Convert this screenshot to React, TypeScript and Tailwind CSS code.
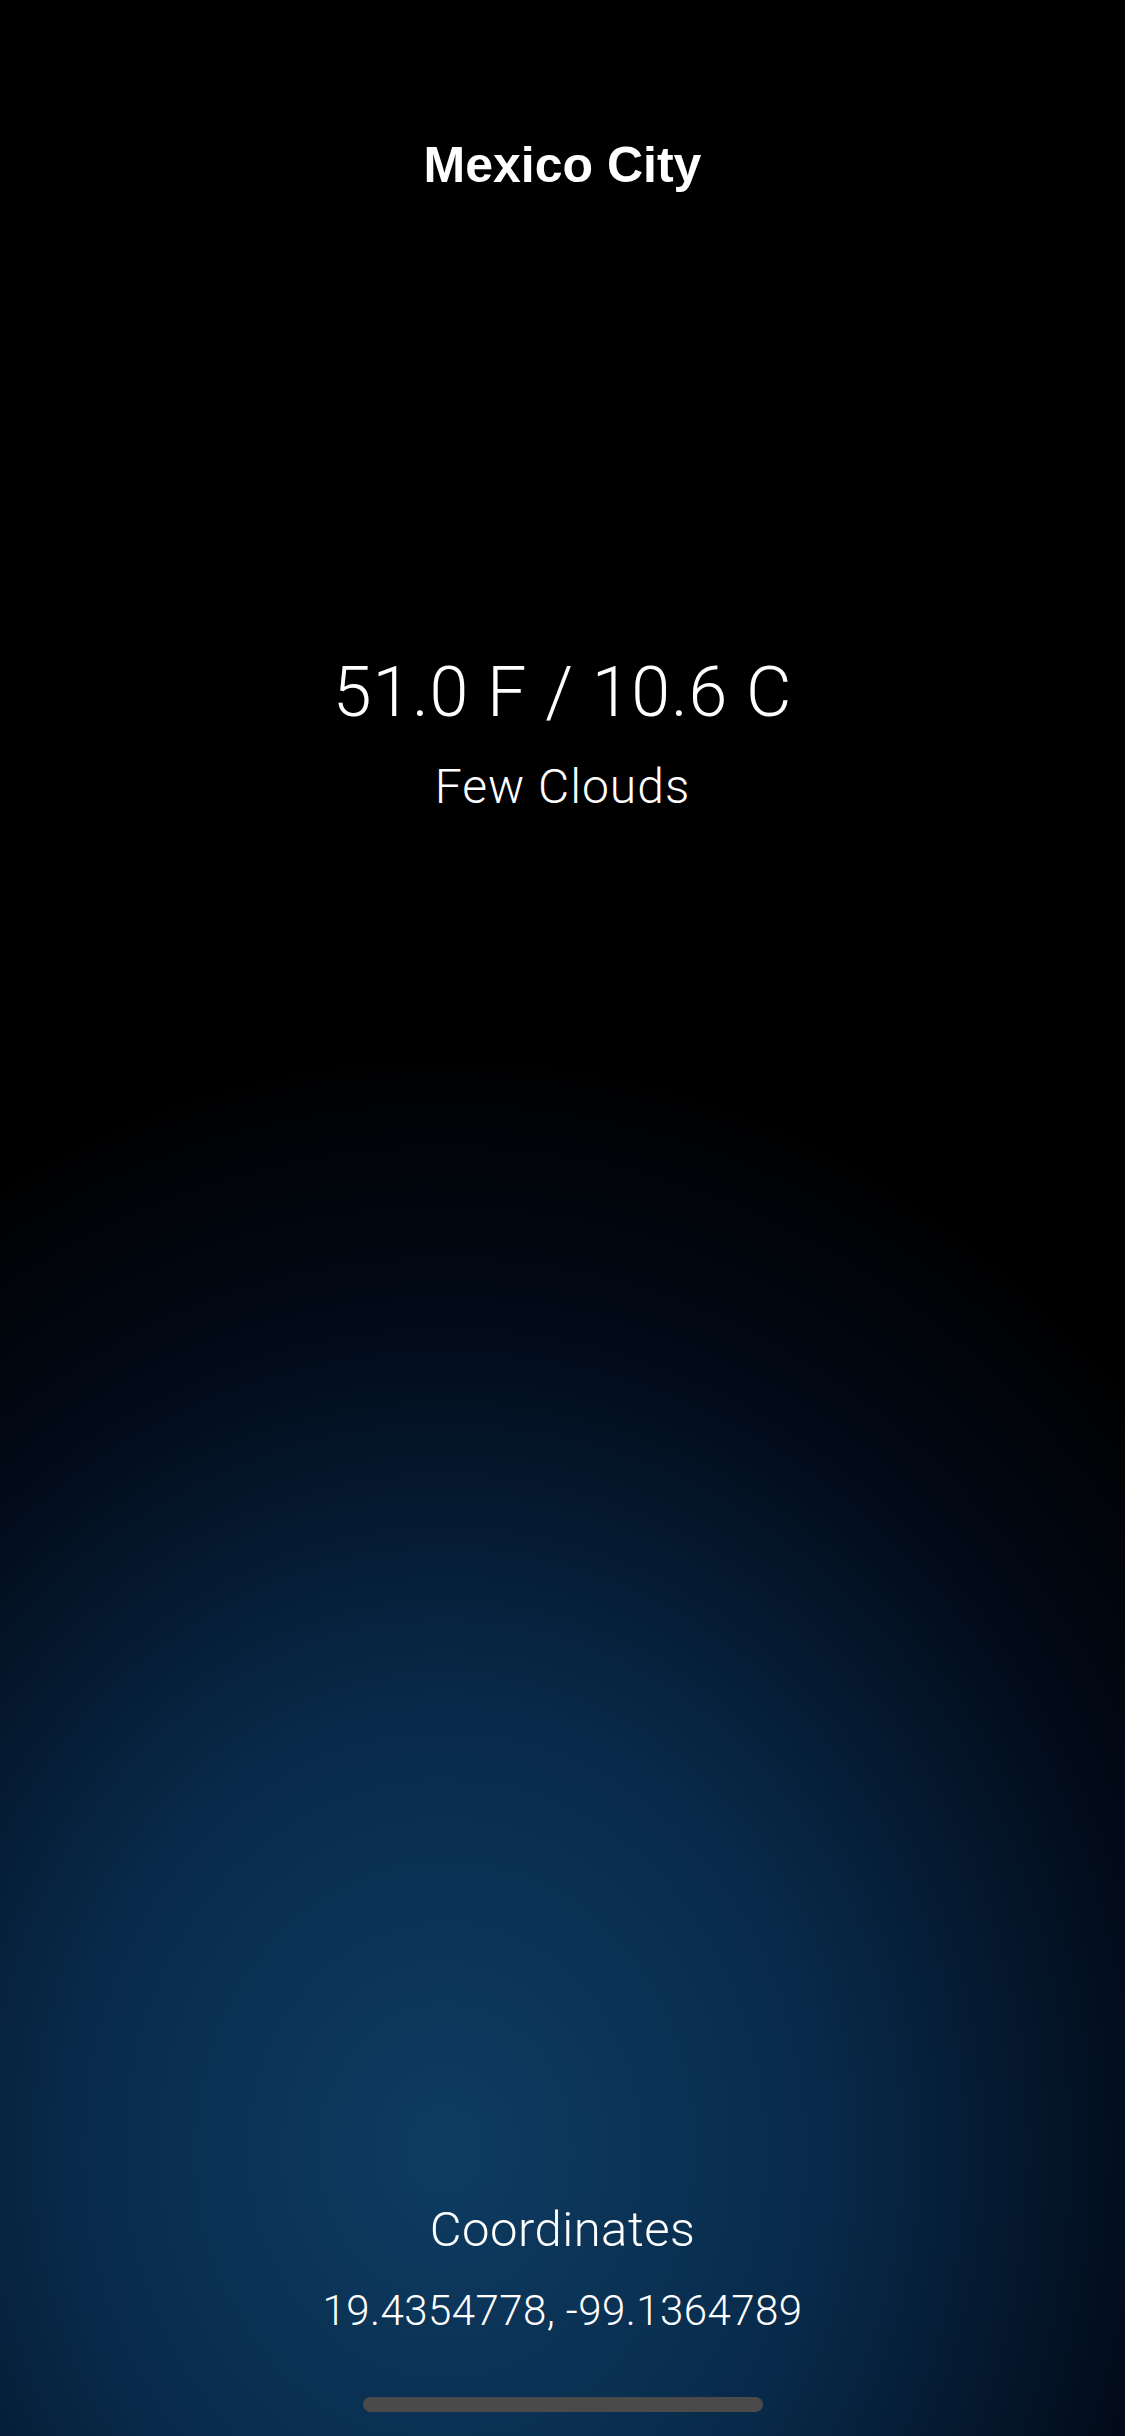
export default function App() {
  const weather = {
    city: "Mexico City",
    fahrenheit: "51.0",
    celsius: "10.6",
    description: "Few Clouds",
    lat: "19.4354778",
    lon: "-99.1364789",
  };

  return (
    <div className="flex h-[2436px] w-full flex-col items-center bg-black bg-[radial-gradient(ellipse_950px_1100px_at_445px_2150px,#0e3c62_0%,#082a4a_40%,#020a18_76%,#000000_100%)] pt-[140px] pb-[24px] text-white">
      <h1 className="font-['Liberation_Sans',Arial,sans-serif] text-[50px] leading-none font-bold">
        {weather.city}
      </h1>

      <div className="mt-[467px] font-['Roboto',sans-serif] text-[70px] leading-none font-light tracking-[0.8px]">
        {weather.fahrenheit} F / {weather.celsius} C
      </div>
      <div className="mt-[36px] font-['Roboto',sans-serif] text-[48px] leading-none font-light tracking-[1px]">
        {weather.description}
      </div>

      <div className="mt-auto flex flex-col items-center font-['Roboto',sans-serif] font-light">
        <div className="text-[49px] leading-none tracking-[0.5px]">Coordinates</div>
        <div className="mt-[36px] text-[42px] leading-none tracking-[0.45px]">
          {weather.lat}, {weather.lon}
        </div>
        <div className="mt-[65px] h-[15px] w-[400px] rounded-full bg-[#4a4a4a]" />
      </div>
    </div>
  );
}
